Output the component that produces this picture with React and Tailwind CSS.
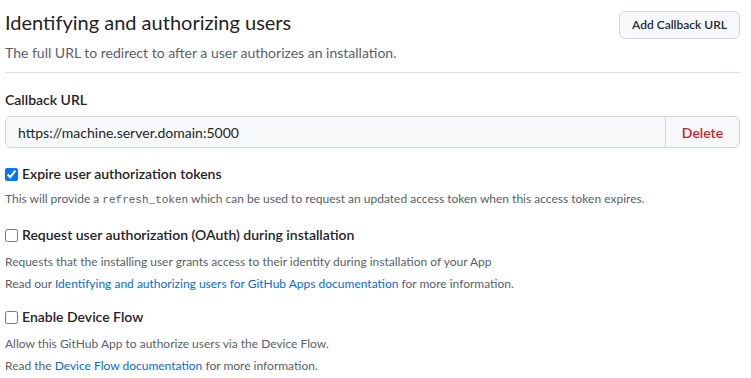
import React from 'react';

const font = { fontFamily: 'Lato, "Noto Sans", sans-serif' };

const App = () => {
  return (
    <div className="w-[751px] h-[378px] bg-white text-[#1f2328] pl-[5px] pr-[11px] overflow-hidden" style={font}>
      <div className="flex items-start justify-between border-b border-[#d8dee4] pb-[9px]">
        <div>
          <h2 className="text-[20px] font-normal leading-[30px] mt-[7px]">Identifying and authorizing users</h2>
          <p className="text-[14px] text-[#57606a] leading-[20px] mt-[6px]">The full URL to redirect to after a user authorizes an installation.</p>
        </div>
        <button className="mt-[11px] h-[28px] px-[12px] text-[12px] font-semibold bg-[#f6f8fa] border border-[#d0d7de] rounded-[6px] text-[#24292f]">
          Add Callback URL
        </button>
      </div>

      <div className="mt-[17px] text-[14px] font-semibold leading-[20px]">Callback URL</div>
      <div className="mt-[6px] flex h-[32px] border border-[#d0d7de] rounded-[6px] bg-[#f6f8fa] overflow-hidden">
        <div className="flex-1 flex items-center px-[12px] text-[14px]">https://machine.server.domain:5000</div>
        <button className="w-[74px] border-l border-[#d0d7de] text-[14px] font-semibold text-[#cf222e]">Delete</button>
      </div>

      <div className="mt-[16px] flex items-center gap-[4px]">
        <input type="checkbox" defaultChecked className="w-[13px] h-[13px] m-0 accent-[#0075ff]" />
        <span className="text-[14px] font-semibold leading-[20px]">Expire user authorization tokens</span>
      </div>
      <p className="mt-[6px] text-[12px] text-[#57606a] leading-[18px]">
        This will provide a <code className="text-[11px]" style={{ fontFamily: '"Liberation Mono", monospace' }}>refresh_token</code> which can be used to request an updated access token when this access token expires.
      </p>

      <div className="mt-[16px] flex items-center gap-[4px]">
        <input type="checkbox" className="w-[13px] h-[13px] m-0" />
        <span className="text-[14px] font-semibold leading-[20px]">Request user authorization (OAuth) during installation</span>
      </div>
      <p className="mt-[6px] text-[12px] text-[#57606a] leading-[22px]">Requests that the installing user grants access to their identity during installation of your App</p>
      <p className="text-[12px] text-[#57606a] leading-[22px]">
        Read our <a className="text-[#0969da]" href="#">Identifying and authorizing users for GitHub Apps documentation</a> for more information.
      </p>

      <div className="mt-[12px] flex items-center gap-[4px]">
        <input type="checkbox" className="w-[13px] h-[13px] m-0" />
        <span className="text-[14px] font-semibold leading-[20px]">Enable Device Flow</span>
      </div>
      <p className="mt-[6px] text-[12px] text-[#57606a] leading-[22px]">Allow this GitHub App to authorize users via the Device Flow.</p>
      <p className="text-[12px] text-[#57606a] leading-[22px]">
        Read the <a className="text-[#0969da]" href="#">Device Flow documentation</a> for more information.
      </p>
    </div>
  );
};

export default App;
